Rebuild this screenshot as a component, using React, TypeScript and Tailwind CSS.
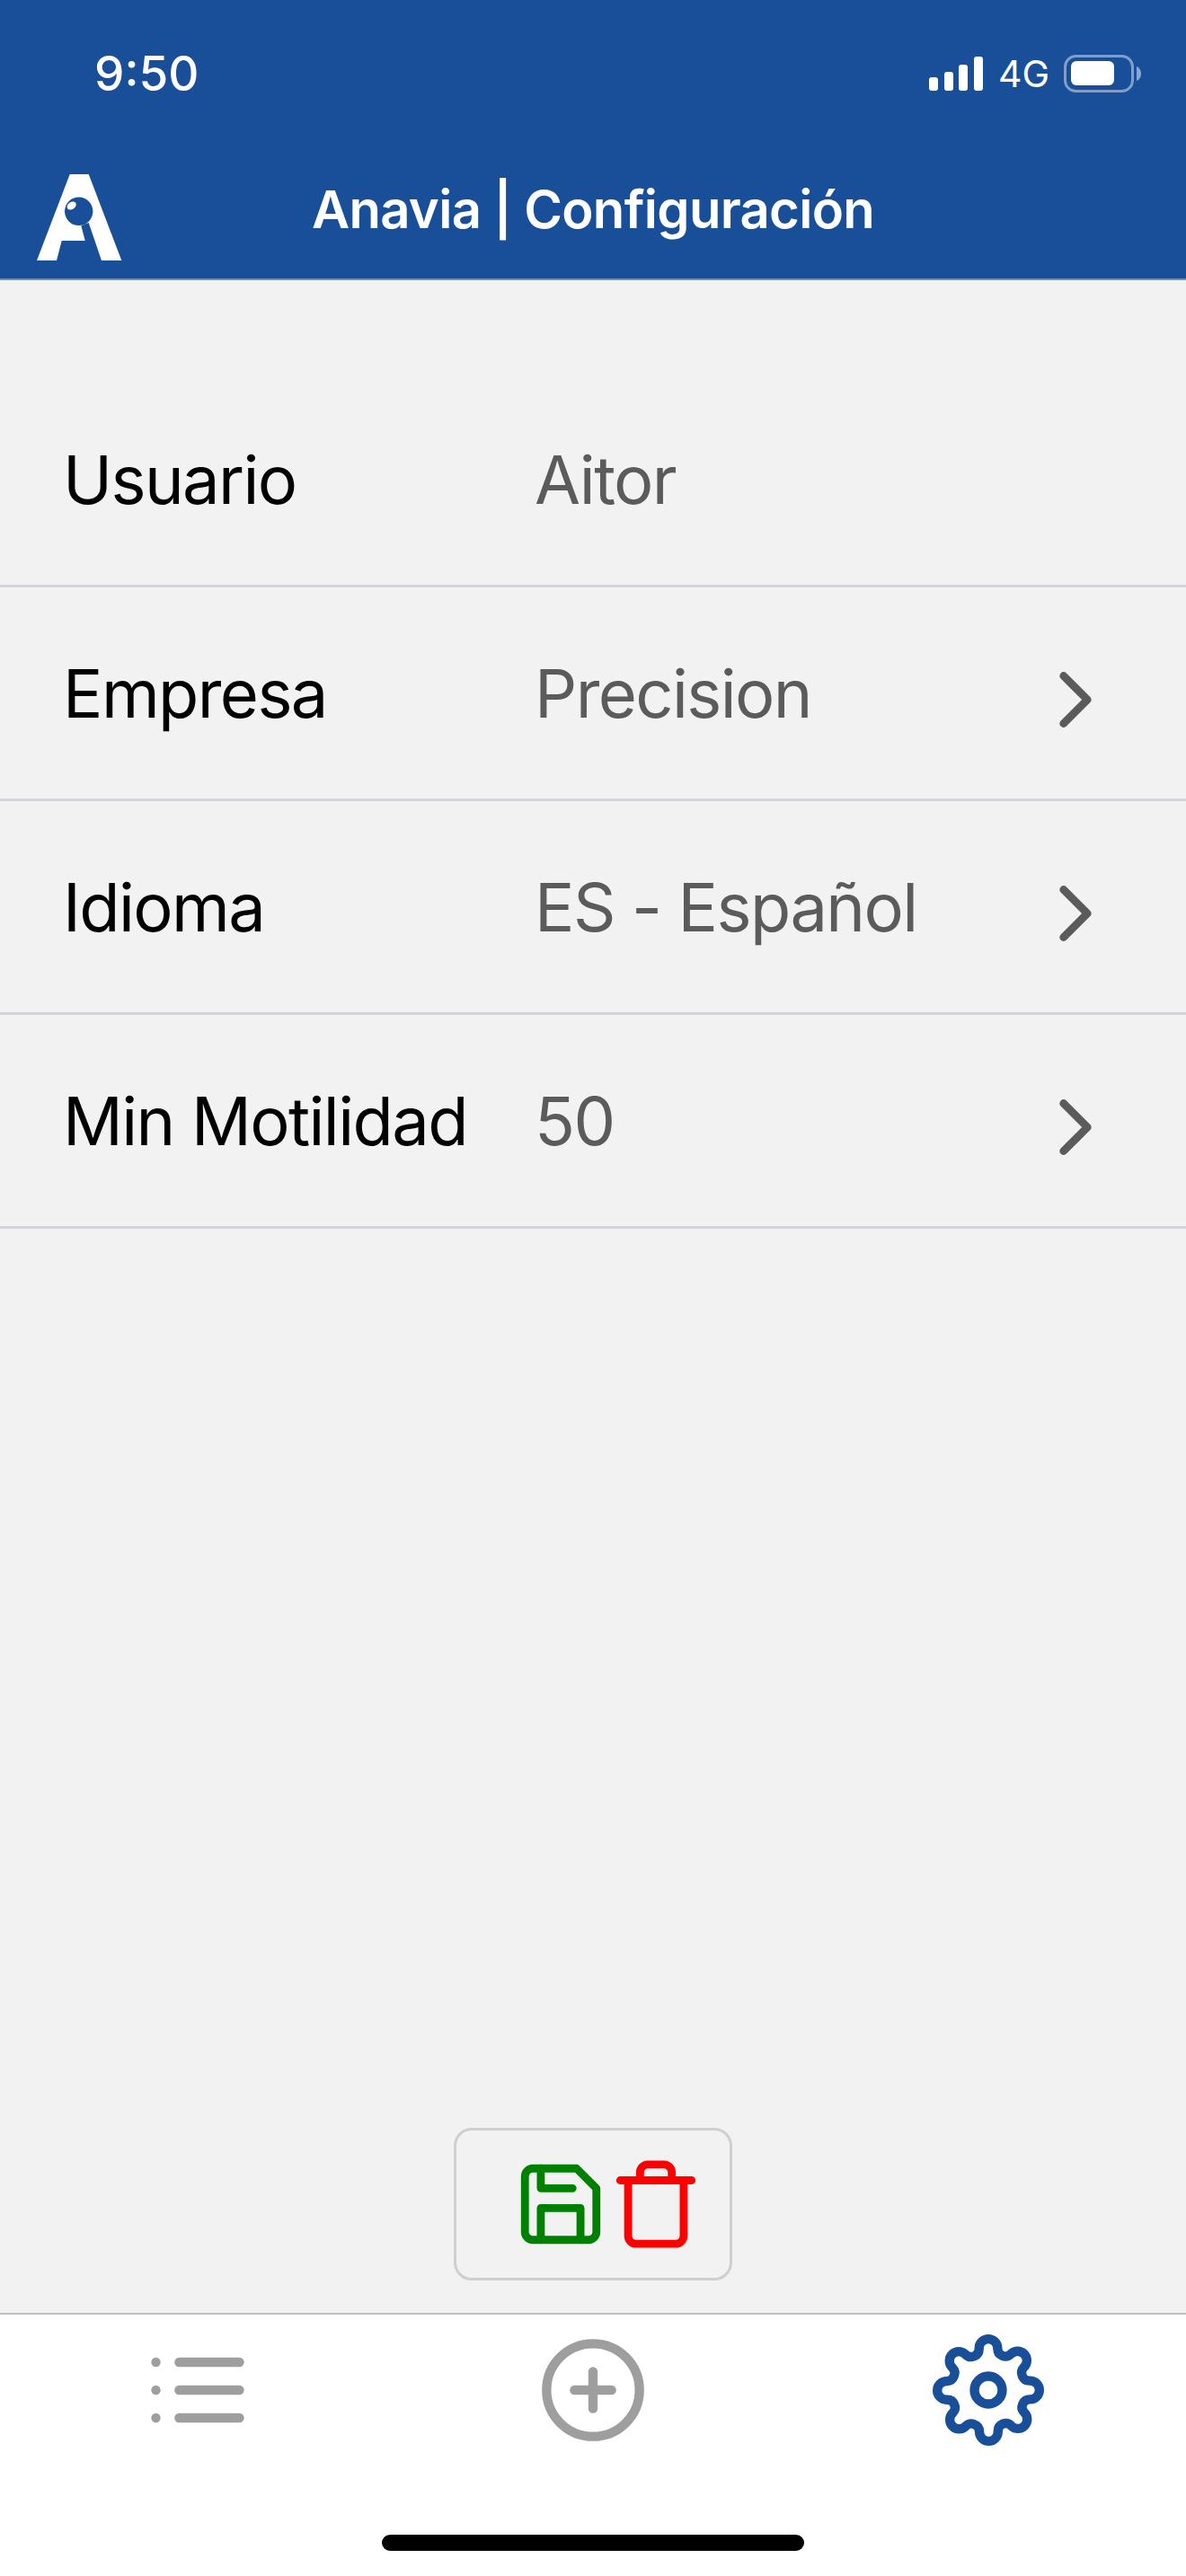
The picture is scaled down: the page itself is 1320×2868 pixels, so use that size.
import React from 'react';
import { FiChevronRight, FiList, FiPlusCircle, FiSave, FiSettings, FiTrash } from 'react-icons/fi';

const rows = [
    { label: 'Usuario', value: 'Aitor', hasArrow: false },
    { label: 'Empresa', value: 'Precision', hasArrow: true },
    { label: 'Idioma', value: 'ES - Español', hasArrow: true },
    { label: 'Min Motilidad', value: '50', hasArrow: true },
];

const Logo: React.FC = () => (
    <svg viewBox="0 0 95 96" className="w-[95px] h-[96px]">
        <path d="M36.7 0H57.7L94.3 96H72L57.7 54L49.3 57.3L53.7 74H27.7L22 96H0Z" fill="#fff" />
        <circle cx="46.7" cy="41.3" r="15.7" fill="#194f99" />
        <ellipse cx="38.7" cy="35" rx="5.5" ry="4" transform="rotate(-35 38.7 35)" fill="#fff" />
    </svg>
);

const Signal: React.FC = () => (
    <svg viewBox="0 0 60 38" className="w-[60px] h-[38px]">
        <rect x="0" y="23" width="10" height="15" rx="3" fill="#fff" />
        <rect x="17" y="17" width="10" height="21" rx="3" fill="#fff" />
        <rect x="33" y="9" width="10" height="29" rx="3" fill="#fff" />
        <rect x="50" y="0" width="10" height="38" rx="3" fill="#fff" />
    </svg>
);

const Battery: React.FC = () => (
    <svg viewBox="0 0 86 42" className="w-[86px] h-[42px]">
        <rect x="1.5" y="1.5" width="75" height="39" rx="12" fill="none" stroke="#fff" strokeOpacity="0.45" strokeWidth="3" />
        <rect x="8" y="7" width="48" height="27" rx="6" fill="#fff" />
        <path d="M81 13c3 1 5 4 5 8s-2 7-5 8z" fill="#fff" fillOpacity="0.5" />
    </svg>
);

const App: React.FC = () => {
    return (
        <div className="h-[2868px] flex flex-col bg-[#f2f2f2] font-['Inter',sans-serif]">
            <header className="h-[312px] shrink-0 bg-[#194f99] border-b-2 border-[#6f8fbf] text-white">
                <div className="flex items-center h-[42px] mt-[61px] pl-[105px] pr-[50px]">
                    <span className="text-[53px] leading-none font-medium">9:50</span>
                    <div className="ml-auto flex items-center">
                        <Signal />
                        <span className="ml-[17px] text-[41px] leading-none">4G</span>
                        <span className="ml-[16px]"><Battery /></span>
                    </div>
                </div>
                <div className="relative flex items-center justify-center h-[96px] mt-[91px]">
                    <span className="absolute left-[41px] top-0"><Logo /></span>
                    <h1 className="text-[58px] leading-none font-semibold tracking-[-0.7px] -mt-[18px]">Anavia | Configuración</h1>
                </div>
            </header>

            <main className="flex-1 flex flex-col pt-[104px] pb-[36px]">
                {rows.map((row) => (
                    <div key={row.label} className="h-[238px] flex items-center border-b-[3px] border-[#d0d5dd] pl-[70px] pr-[70px] text-[74px] tracking-[-1.6px]">
                        <span className="w-[525px] mt-[2px] text-black">{row.label}</span>
                        <span className="mt-[2px] text-[#5b5b5b]">{row.value}</span>
                        {row.hasArrow && <FiChevronRight className="ml-auto mt-[14px] w-[106px] h-[106px] text-[#5b5b5b]" />}
                    </div>
                ))}
                <button className="mt-auto self-center w-[310px] h-[170px] flex items-center pl-[63px] border-[3px] border-[#cfcfcf] rounded-[20px]">
                    <FiSave className="w-[106px] h-[106px] text-[#008000]" />
                    <FiTrash className="w-[106px] h-[106px] text-[#ff0000]" />
                </button>
            </main>

            <nav className="h-[293px] shrink-0 bg-white border-t-[2px] border-[#bdbdbd] flex flex-col">
                <div className="grid grid-cols-3 justify-items-center mt-[22px]">
                    <FiList className="w-[124px] h-[124px] text-[#9e9e9e]" />
                    <FiPlusCircle className="w-[124px] h-[124px] text-[#9e9e9e]" />
                    <FiSettings className="w-[124px] h-[124px] text-[#194f99]" />
                </div>
                <div className="self-center w-[470px] h-[18px] mt-[99px] rounded-full bg-black" />
            </nav>
        </div>
    );
};

export default App;
